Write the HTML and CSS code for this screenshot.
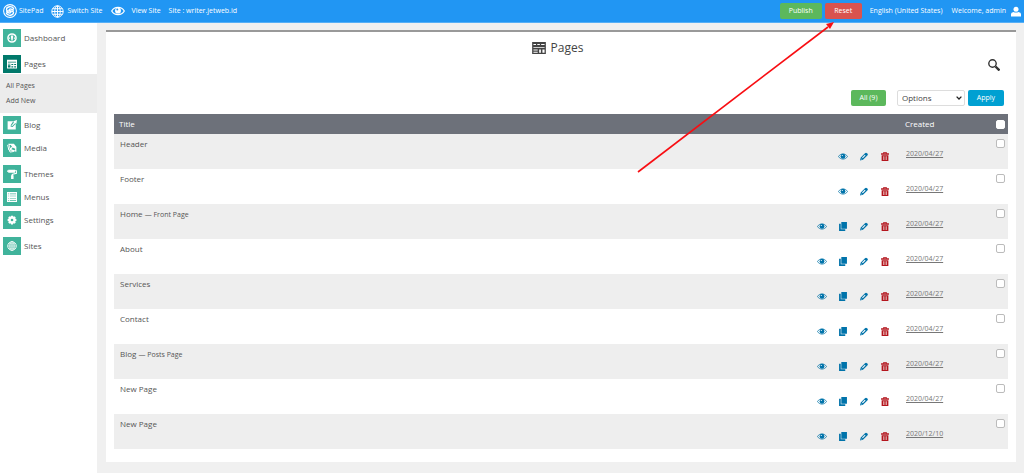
FILE: index.html
```html
<!DOCTYPE html>
<html lang="en">
<head>
<meta charset="utf-8">
<title>SitePad - Pages</title>
<link rel="stylesheet" href="styles.css">
</head>
<body>
<svg class="defs" aria-hidden="true">
  <symbol id="globe" viewBox="0 0 16 16"><g fill="none" stroke="currentColor" stroke-width="1.2"><circle cx="8" cy="8" r="7"/><ellipse cx="8" cy="8" rx="3.4" ry="7"/><path d="M8 1v14M1 8h14M2 4.6h12M2 11.4h12"/></g></symbol>
  <symbol id="eye" viewBox="0 0 20 14"><path fill="none" stroke="currentColor" stroke-width="1.600" d="M1 7C5 .2 15 .2 19 7 15 13.800 5 13.800 1 7z"/><circle cx="10" cy="6.500" r="4.800" fill="currentColor"/><circle cx="8.600" cy="5" r="1.200" fill="#fff"/></symbol>
  <symbol id="page" viewBox="0 0 16 14"><path fill="currentColor" fill-rule="evenodd" d="M0 0h16v14H0zM1.500 2.200v1.400h3V2.200zM6 2.200v1.400h3V2.200zM10.500 2.200v1.400h4V2.200zM1.500 6v1h13V6zM1.500 8.800v1h5v-1zM1.500 11.400v1h5v-1zM8.200 8.800v3.600h2V8.800zM12 8.800v3.600h2.500V8.800z"/></symbol>
  <symbol id="layout" viewBox="0 0 16 14"><path fill="currentColor" fill-rule="evenodd" d="M0 0h16v14H0zM1.500 3.500v1.200h13V3.500zM1.500 6.500v1.200h4V6.500zM1.500 9v3.500h4V9zM7 7v1.500h3V7zM11.500 7v1.500h3V7zM7 10.500v2h3v-2zM11.500 10.500v2h3v-2z"/></symbol>
  <symbol id="dash" viewBox="0 0 16 16"><circle cx="8" cy="8" r="6.500" fill="none" stroke="currentColor" stroke-width="2.400"/><path fill="currentColor" d="M6 4h4L9 12H7zM3 7h2v2H3zM11 7h2v2h-2z"/></symbol>
  <symbol id="edit" viewBox="0 0 16 16"><path fill="currentColor" d="M1 2h9L6 8v3h3l5-5v9H1z"/><path fill="currentColor" d="M6.500 10 11 4l-1-2 6-2-1 6-2-1-5 5z"/></symbol>
  <symbol id="media" viewBox="0 0 16 16"><path fill="none" stroke="currentColor" stroke-width="1.600" d="m2 8 3 6.500 6-1M1 3l2 8"/><path fill="currentColor" fill-rule="evenodd" d="m2 1 9 0 4 5v8L5 12zM4 3l1 5 3-2-2-3zM9 7l-2 3 6 2V9z"/></symbol>
  <symbol id="roller" viewBox="0 0 16 16"><path fill="currentColor" d="M2 1h11v1h3v5.500L9.500 9v1h1v6h-4v-6h1V8l7-2V3.500H13V6H2V4.500H0v-2h2z"/></symbol>
  <symbol id="list" viewBox="0 0 16 16"><path fill="currentColor" fill-rule="evenodd" d="M0 0h16v16H0zM1.500 2.400v1H3v-1zM4.500 2.400v1h10v-1zM1.500 5.900v1H3v-1zM4.500 5.900v1h10v-1zM1.500 9.400v1H3v-1zM4.500 9.400v1h10v-1zM1.500 12.900v1H3v-1zM4.500 12.900v1h10v-1z"/></symbol>
  <symbol id="gear" viewBox="0 0 16 16"><path fill="none" stroke="currentColor" stroke-width="3.200" d="M8 1v3M8 12v3M1 8h3M12 8h3M3 3 5 5M11 11l2 2M3 13 5 11M11 5l2-2"/><circle cx="8" cy="8" r="4" fill="none" stroke="currentColor" stroke-width="3.800"/></symbol>
  <symbol id="copy" viewBox="0 0 14 16"><path fill="currentColor" d="M4 0h10v12H4zM0 3h3v10h8v3H0z"/></symbol>
  <symbol id="pencil" viewBox="0 0 16 16"><path fill="currentColor" fill-rule="evenodd" d="m0 16 1.500-6L10 1.500q2-2 4 0l.7.7q2 2 0 4L6 14.500zM9.500 4.500l-5.500 5.500 1.600 1.600 5.500-5.500zM2.500 12l-.6 2 2-.6z"/></symbol>
  <symbol id="trash" viewBox="0 0 14 16"><path fill="currentColor" fill-rule="evenodd" d="M4 0h6v2h4v3H0V2h4zM5.500 1.200V2h3v-.8zM1 5.700h12V16H1zM3.700 7.500v6.500h1v-6.500zM6.500 7.500v6.500h1v-6.500zM9.300 7.500v6.500h1v-6.500z"/></symbol>
</svg>

<header class="topbar">
  <a class="bar-link brand" href="#"><svg class="logo" viewBox="0 0 16 16"><circle cx="8" cy="8" r="7.300" fill="none" stroke="#fff" stroke-width="1.200"/><path fill="none" stroke="#fff" stroke-width="1.500" d="M12.500 5.500C10 1.500 4 3 4 6.200c0 3 5 1.200 5 3 0 1.500-2.500 1.500-5.500-.5M3.500 10.500C6 14.500 12 13 12 9.800c0-3-5-1.200-5-3C7 5.300 9.500 5.300 12.500 7.300"/></svg>SitePad</a>
  <a class="bar-link switch" href="#"><svg class="bar-icon"><use href="#globe"/></svg>Switch Site</a>
  <a class="bar-link view" href="#"><svg class="bar-eye" viewBox="0 0 20 14"><path fill="none" stroke="#fff" stroke-width="1.800" d="M1 7C5 .2 15 .2 19 7 15 13.800 5 13.800 1 7z"/><circle cx="10" cy="6.500" r="4.200" fill="#fff"/><circle cx="9" cy="5" r="1.400" fill="#2196f3"/></svg>View Site</a>
  <span>Site : writer.jetweb.id</span>
  <div class="bar-right">
    <button class="btn publish" type="button">Publish</button>
    <button class="btn reset" type="button">Reset</button>
    <span class="language">English (United States)</span>
    <a class="bar-link user" href="#">Welcome, admin<svg class="avatar" viewBox="0 0 12 12"><circle cx="6" cy="3.200" r="3" fill="#fff"/><path fill="#fff" d="M0 12V9q0-2 3-2.500 3 1.500 6 0Q12 7 12 9v3z"/></svg></a>
  </div>
  <svg class="pointer" viewBox="0 0 200 154" aria-hidden="true"><path stroke="#f80d12" stroke-width="1.600" d="M1 152 191 7"/><path fill="#f80d12" d="m197 2-4 7-4-5z"/></svg>
</header>

<div class="layout">
  <nav class="sidebar">
    <a class="nav-item" href="#"><span class="tile"><svg><use href="#dash"/></svg></span>Dashboard</a>
    <a class="nav-item section active" href="#"><span class="tile"><svg><use href="#layout"/></svg></span>Pages</a>
    <div class="submenu"><a href="#">All Pages</a><a href="#">Add New</a></div>
    <a class="nav-item" href="#"><span class="tile"><svg><use href="#edit"/></svg></span>Blog</a>
    <a class="nav-item" href="#"><span class="tile"><svg><use href="#media"/></svg></span>Media</a>
    <a class="nav-item section" href="#"><span class="tile"><svg><use href="#roller"/></svg></span>Themes</a>
    <a class="nav-item" href="#"><span class="tile"><svg><use href="#list"/></svg></span>Menus</a>
    <a class="nav-item" href="#"><span class="tile"><svg><use href="#gear"/></svg></span>Settings</a>
    <a class="nav-item section" href="#"><span class="tile"><svg><use href="#globe"/></svg></span>Sites</a>
  </nav>

  <main class="card">
    <h1><svg><use href="#page"/></svg>Pages</h1>
    <div class="search-row"><button class="search" type="button" aria-label="Search"><svg viewBox="0 0 12 12"><circle cx="4.500" cy="4.500" r="3.700" fill="none" stroke="#333" stroke-width="1.400"/><path stroke="#333" stroke-width="2.400" d="m7.500 7.500 4 4"/></svg></button></div>
    <div class="tools">
      <button class="btn all" type="button">All (9)</button>
      <div class="select-wrap">
        <select aria-label="Bulk action"><option>Options</option></select>
        <svg viewBox="0 0 6 4" aria-hidden="true"><path fill="none" stroke="#222" stroke-width="1.300" d="m.6.600 2.400 2.400L5.400.600"/></svg>
      </div>
      <button class="btn apply" type="button">Apply</button>
    </div>
    <table>
      <thead><tr><th>Title</th><th class="col-actions"></th><th class="col-date">Created</th><th class="col-check"><input type="checkbox" aria-label="Select all"></th></tr></thead>
      <tbody id="rows"></tbody>
    </table>
  </main>
</div>
<script src="pages.js"></script>
</body>
</html>
```

FILE: styles.css
```css
* { box-sizing: border-box; }
body {
  margin: 0;
  min-height: 100vh;
  display: flex;
  flex-direction: column;
  background: #f0f0f0;
  color: #555;
  font: 7px/10px "Open Sans", sans-serif;
}
a { color: inherit; text-decoration: none; }
button, select { font: inherit; }
svg { display: block; flex: none; }
.defs { position: absolute; width: 0; height: 0; }

.topbar {
  position: relative;
  display: flex;
  align-items: center;
  height: 23px;
  padding: 0 3px;
  background: #2196f3;
  border-bottom: 1px solid #56aff6;
  color: #fff;
  font-weight: 500;
}
.bar-link { display: flex; align-items: center; }
.logo { width: 14px; height: 14px; margin-right: 2px; }
.switch { margin-left: 8px; }
.bar-icon { width: 13px; height: 13px; margin-right: 3px; }
.view { margin: 0 8px 0 9px; }
.bar-eye { width: 14px; height: 10px; margin-right: 6px; }
.bar-right { display: flex; align-items: center; margin-left: auto; }
.btn {
  border: 0;
  border-radius: 2px;
  padding: 0;
  height: 16px;
  color: #fff;
  font-weight: 500;
  text-align: center;
}
.publish { width: 42px; background: #5cb85c; }
.reset { width: 37px; margin: 0 8px 0 3px; background: #d9534f; }
.language { margin-right: 9px; }
.avatar { width: 10px; height: 11px; margin-left: 5px; }
.pointer {
  position: absolute;
  top: 20px;
  right: 187px;
  width: 200px;
  height: 154px;
  z-index: 1;
  pointer-events: none;
}

.layout { display: flex; flex: 1; }
.sidebar {
  display: flex;
  flex-direction: column;
  gap: 5px;
  width: 97px;
  padding-top: 6px;
  background: #fff;
}
.nav-item {
  display: flex;
  align-items: center;
  gap: 3px;
  padding-left: 3px;
  font-size: 8px;
  line-height: 12px;
}
.section { margin-top: 3px; }
.tile {
  display: grid;
  place-items: center;
  width: 18px;
  height: 18px;
  background: #40b39b;
  color: #fff;
}
.tile svg { width: 10px; height: 10px; }
.active .tile { background: #01796b; }
.submenu {
  display: flex;
  flex-direction: column;
  gap: 5px;
  margin: -4px 0 -2px;
  padding: 7px 6px;
  background: #ececec;
}

.card {
  flex: 1;
  align-self: flex-start;
  margin: 7px 8px 11px 9px;
  padding: 0 8px 13px;
  background: #fff;
  border-top: 2px solid #999;
}
h1 {
  display: flex;
  justify-content: center;
  align-items: center;
  gap: 5px;
  margin: 8px 0 0;
  padding-right: 7px;
  color: #444;
  font-size: 12px;
  font-weight: 400;
  line-height: 16px;
}
h1 svg { width: 14px; height: 12px; }
.search-row { display: flex; justify-content: flex-end; padding: 3px 8px 0; }
.search { border: 0; padding: 0; background: none; }
.search svg { width: 12px; height: 12px; }
.tools {
  display: flex;
  justify-content: flex-end;
  align-items: center;
  padding: 19px 4px 8px;
}
.all { width: 35px; background: #5cb85c; }
.select-wrap { display: grid; align-items: center; width: 68px; margin: 0 3px 0 11px; }
.select-wrap > * { grid-area: 1 / 1; }
.select-wrap svg { width: 6px; height: 4px; margin-left: auto; margin-right: 3px; pointer-events: none; }
select {
  appearance: none;
  width: 100%;
  height: 16px;
  padding: 0 4px;
  border: 1px solid #ddd;
  border-radius: 2px;
  background: #fff;
  color: #444;
  font-size: 8px;
}
.apply { width: 36px; background: #00a0d2; }

table {
  width: 100%;
  border-collapse: collapse;
  table-layout: fixed;
  font-size: 8px;
}
th {
  height: 20px;
  padding: 0 5px;
  background: #6d717a;
  color: #fff;
  font-weight: 400;
  text-align: left;
}
.col-actions { width: 90px; }
.col-date { width: 88px; }
.col-check { width: 20px; }
td { height: 35px; padding: 5px 6px; vertical-align: top; }
tbody tr:nth-child(odd) { background: #eee; }
.note { font-size: 7px; }
td.tools-cell { padding: 17px 10px 0 0; }
.actions { display: flex; justify-content: flex-end; gap: 11px; }
.actions a { display: grid; place-items: center; width: 10px; height: 10px; color: #0073aa; }
.actions svg { width: 8px; height: 9px; }
.actions .eye svg { width: 10px; height: 7px; }
.actions .delete { color: #b4151d; }
td.date { padding-top: 15px; color: #777; font-size: 7px; }
.date a { text-decoration: underline; }
.col-check, td.check { padding: 5px 3px; }
input[type="checkbox"] {
  appearance: none;
  display: block;
  width: 9px;
  height: 9px;
  margin: 0 0 0 auto;
  border: 1px solid #bbb;
  border-radius: 2px;
  background: #fff;
}
thead input[type="checkbox"] { border-color: #fff; }
```

FILE: pages.js
```js
const pages = [
  { title: "Header", date: "2020/04/27", fixed: true },
  { title: "Footer", date: "2020/04/27", fixed: true },
  { title: "Home", note: "Front Page", date: "2020/04/27" },
  { title: "About", date: "2020/04/27" },
  { title: "Services", date: "2020/04/27" },
  { title: "Contact", date: "2020/04/27" },
  { title: "Blog", note: "Posts Page", date: "2020/04/27" },
  { title: "New Page", date: "2020/04/27" },
  { title: "New Page", date: "2020/12/10" }
];

const action = (name, icon, label) =>
  `<a class="${name}" href="#" aria-label="${label}"><svg><use href="#${icon}"/></svg></a>`;

document.getElementById("rows").innerHTML = pages.map(p => `
  <tr>
    <td>${p.title}${p.note ? ` <span class="note">— ${p.note}</span>` : ""}</td>
    <td class="tools-cell"><div class="actions">${action("eye", "eye", "View")}${p.fixed ? "" : action("clone", "copy", "Clone")}${action("edit", "pencil", "Edit")}${action("delete", "trash", "Delete")}</div></td>
    <td class="date"><a href="#">${p.date}</a></td>
    <td class="check"><input type="checkbox" aria-label="Select ${p.title}"></td>
  </tr>`).join("");
```
